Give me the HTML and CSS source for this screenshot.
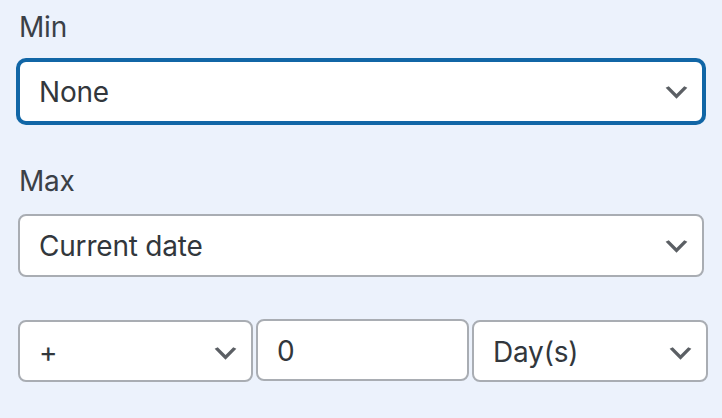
FILE: index.html
```html
<!DOCTYPE html>
<html lang="en">
<head>
<meta charset="utf-8">
<title>Date range</title>
<link rel="stylesheet" href="styles.css">
</head>
<body>
<div class="panel">
  <div class="field field-min">
    <label class="label">Min</label>
    <div class="select is-focused" role="combobox">
      <span class="value">None</span>
      <svg class="chevron" viewBox="0 0 20 20" aria-hidden="true"><path d="M5 6l5 5 5-5 2 1-7 7-7-7 2-1z"/></svg>
    </div>
  </div>
  <div class="field field-max">
    <label class="label">Max</label>
    <div class="select" role="combobox">
      <span class="value">Current date</span>
      <svg class="chevron" viewBox="0 0 20 20" aria-hidden="true"><path d="M5 6l5 5 5-5 2 1-7 7-7-7 2-1z"/></svg>
    </div>
  </div>
  <div class="offset-row">
    <div class="select select-sign" role="combobox">
      <span class="value">+</span>
      <svg class="chevron" viewBox="0 0 20 20" aria-hidden="true"><path d="M5 6l5 5 5-5 2 1-7 7-7-7 2-1z"/></svg>
    </div>
    <div class="number-input"><span class="value">0</span></div>
    <div class="select select-unit" role="combobox">
      <span class="value">Day(s)</span>
      <svg class="chevron" viewBox="0 0 20 20" aria-hidden="true"><path d="M5 6l5 5 5-5 2 1-7 7-7-7 2-1z"/></svg>
    </div>
  </div>
</div>
</body>
</html>
```
FILE: styles.css
```css
html, body {
  margin: 0;
  padding: 0;
}

body {
  background: #ecf2fc;
  font-family: Inter, "Liberation Sans", sans-serif;
  width: 722px;
  height: 418px;
  overflow: hidden;
}

.panel {
  padding: 10px 0 0 18px;
}

.label {
  display: block;
  font-size: 28px;
  line-height: 34px;
  color: #3a4047;
  letter-spacing: -0.2px;
  margin-bottom: 16px;
  padding-left: 1px;
}

.field-min {
  margin-bottom: 41px;
}

.field-max {
  margin-bottom: 42px;
}

.select,
.number-input {
  box-sizing: border-box;
  display: flex;
  align-items: center;
  justify-content: space-between;
  background: #fff;
  border: 2px solid #a9adb3;
  border-radius: 8px;
  height: 63px;
  padding: 0 10px 0 19px;
  font-size: 28px;
  color: #32373c;
  letter-spacing: -0.2px;
}

.field .select {
  width: 686px;
}

.select.is-focused {
  border-color: #1166a6;
  box-shadow: 0 0 0 2px #1166a6;
}

.value {
  line-height: 34px;
  white-space: nowrap;
}

.chevron {
  width: 31px;
  height: 31px;
  fill: #5b5f64;
  flex: none;
  margin-top: 2px;
}

.offset-row {
  display: flex;
  align-items: flex-start;
  gap: 3px;
}

.offset-row .select,
.offset-row .number-input {
  height: 62px;
  padding-top: 2px;
}

.select-sign {
  width: 235px;
  margin-top: 1px;
}

.number-input {
  width: 213px;
}

.select-unit {
  width: 236px;
  margin-top: 1px;
}
```
